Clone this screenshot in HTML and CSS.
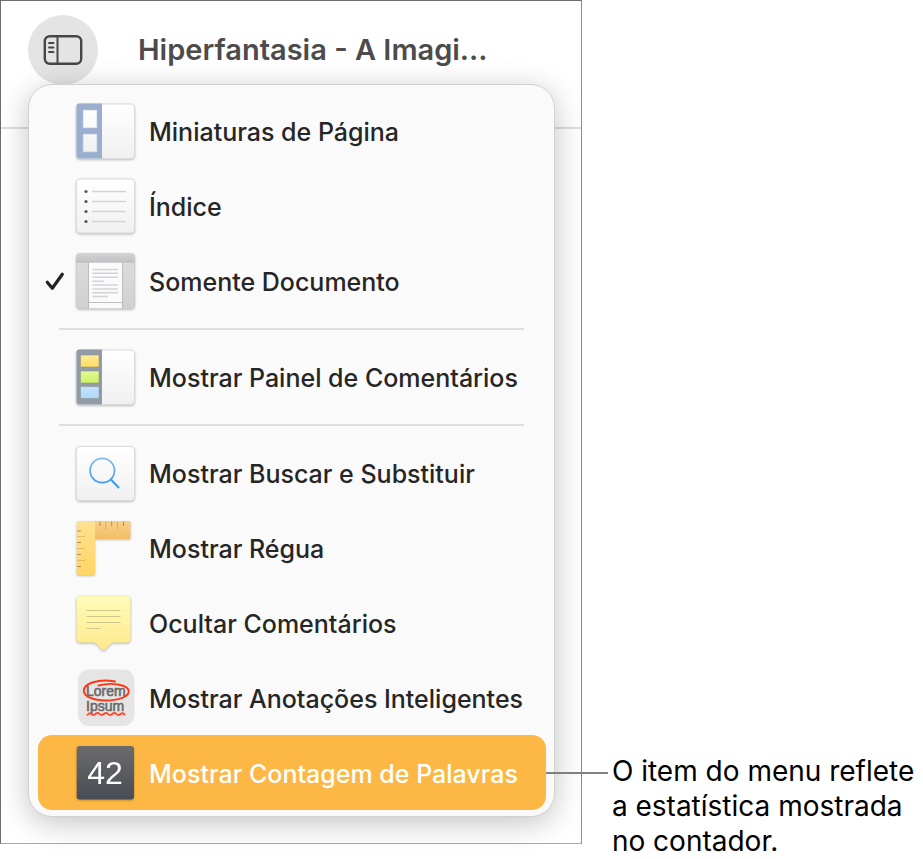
FILE: index.html
```html
<!DOCTYPE html>
<html lang="pt-BR">
<head>
<meta charset="utf-8">
<meta name="viewport" content="width=device-width, initial-scale=1">
<title>Hiperfantasia</title>
<link rel="stylesheet" href="styles.css">
</head>
<body>
<svg class="defs" aria-hidden="true">
  <defs>
    <linearGradient id="paper" x1="0" y1="0" x2="0" y2="1"><stop offset="0" stop-color="#fff"/><stop offset="1" stop-color="#f0f0f0"/></linearGradient>
    <linearGradient id="chrome" x1="0" y1="0" x2="0" y2="1"><stop offset="0" stop-color="#dcdddf"/><stop offset="1" stop-color="#cfd1d3"/></linearGradient>
    <linearGradient id="bar" x1="0" y1="0" x2="0" y2="1"><stop offset="0" stop-color="#d3d3d4"/><stop offset="1" stop-color="#c2c2c4"/></linearGradient>
    <linearGradient id="yellow" x1="0" y1="0" x2="0" y2="1"><stop offset="0" stop-color="#ffea94"/><stop offset="1" stop-color="#ffdc66"/></linearGradient>
    <linearGradient id="green" x1="0" y1="0" x2="0" y2="1"><stop offset="0" stop-color="#e0f994"/><stop offset="1" stop-color="#cdf367"/></linearGradient>
    <linearGradient id="blue" x1="0" y1="0" x2="0" y2="1"><stop offset="0" stop-color="#c5e2ff"/><stop offset="1" stop-color="#afd7ff"/></linearGradient>
    <linearGradient id="lens" x1="0" y1="0" x2="0" y2="1"><stop offset="0" stop-color="#7dbcf5"/><stop offset="1" stop-color="#3d9bf8"/></linearGradient>
    <linearGradient id="rulerV" x1="0" y1="0" x2="0" y2="1"><stop offset="0" stop-color="#ffe193"/><stop offset="1" stop-color="#ffd564"/></linearGradient>
    <linearGradient id="rulerH" x1="0" y1="0" x2="0" y2="1"><stop offset="0" stop-color="#fad18a"/><stop offset="1" stop-color="#f3bd62"/></linearGradient>
    <linearGradient id="note" x1="0" y1="0" x2="0" y2="1"><stop offset="0" stop-color="#fffcb9"/><stop offset="1" stop-color="#ffe88d"/></linearGradient>
    <linearGradient id="counter" x1="0" y1="0" x2="0" y2="1"><stop offset="0" stop-color="#6b6b6c"/><stop offset="1" stop-color="#484c55"/></linearGradient>
  </defs>
</svg>
<div class="page">
  <main class="window">
    <header class="toolbar">
      <button class="view-button" type="button" aria-label="Visualizar">
        <svg width="40" height="32" viewBox="0 0 40 32" fill="none" stroke="#464646">
          <rect x="1.8" y="2.2" width="36.4" height="27.6" rx="5" stroke-width="2.4"/>
          <path d="M14.5 2v28" stroke-width="2"/>
          <path d="M6 9h4.500M6 13.500h4.500M6 18h4.500" stroke-width="1.900" stroke-linecap="round"/>
        </svg>
      </button>
      <h1 class="title">Hiperfantasia - A Imagi...</h1>
    </header>
    <ul class="menu">
      <li><button class="item" type="button">
        <span class="check"></span>
        <svg class="icon" viewBox="0 0 60 60">
          <rect x="1.500" y="3" width="58" height="54.500" rx="3.500" fill="url(#paper)" stroke="#dcdcdc"/>
          <path d="M4.500 2.500H27V57.500H4.500a3 3 0 0 1-3-3V5.500a3 3 0 0 1 3-3z" fill="#9aafd0"/>
          <path d="M8 9h14v18H8zM8 33h14v18H8z" fill="url(#paper)" stroke="#b7c2d3" stroke-width=".6"/>
        </svg>
        <span class="label">Miniaturas de Página</span></button></li>
      <li><button class="item" type="button">
        <span class="check"></span>
        <svg class="icon" viewBox="0 0 60 60">
          <rect x="1.500" y="3" width="58" height="54" rx="3.500" fill="url(#paper)" stroke="#dcdcdc"/>
          <path d="M17 15.500h34M17 25.500h34M17 35.500h34M17 45.500h34" stroke="#d3d3d4" stroke-width="1.300"/>
          <g fill="#55565a"><circle cx="11" cy="15.500" r="1.600"/><circle cx="11" cy="25.500" r="1.600"/><circle cx="11" cy="35.500" r="1.600"/><circle cx="11" cy="45.500" r="1.600"/></g>
        </svg>
        <span class="label">Índice</span></button></li>
      <li><button class="item" type="button">
        <span class="check"><svg width="20" height="20" viewBox="0 0 20 20" fill="none" stroke="#222" stroke-width="3.200" stroke-linecap="round" stroke-linejoin="round"><path d="M2.300 11.200l5 6L17.300 3.300"/></svg></span>
        <svg class="icon" viewBox="0 0 60 60">
          <rect x="1.500" y="2.500" width="58" height="55" rx="3.500" fill="url(#chrome)" stroke="#c9cacc" stroke-width=".8"/>
          <path d="M5 2h51a3.500 3.500 0 0 1 3.500 3.500V11h-58V5.500A3.500 3.500 0 0 1 5 2z" fill="url(#bar)"/>
          <path d="M1.500 11.300h58" stroke="#b9babc" stroke-width=".8"/>
          <path d="M13.800 11.700h33.700V57.300H13.800z" fill="#fafafa"/>
          <path d="M13.500 11.500v46M47.500 11.500v46" stroke="#b5b7ba" stroke-width=".9"/>
          <path d="M13.500 51.500h34" stroke="#bdbfc1" stroke-width="1"/>
          <path d="M17.500 18.500h25.500M17.500 22.300h25.500M17.500 26.200h25.500M17.500 30.200h11.500M17.500 34h25.500M17.500 38h25.500M17.500 41.700h25.500M17.500 45.500h15.500" stroke="#d2d3d5" stroke-width="1.400"/>
        </svg>
        <span class="label">Somente Documento</span></button></li>
      <li class="separator" role="separator"></li>
      <li><button class="item" type="button">
        <span class="check"></span>
        <svg class="icon" viewBox="0 0 60 60">
          <rect x="1.500" y="3" width="58" height="54.500" rx="3.500" fill="url(#paper)" stroke="#dcdcdc"/>
          <path d="M4.500 2.500H27V57.500H4.500a3 3 0 0 1-3-3V5.500a3 3 0 0 1 3-3z" fill="#929ba6"/>
          <g stroke="#8b8e86" stroke-width=".5"><path d="M5.500 8h18.500v12H5.500z" fill="url(#yellow)"/><path d="M5.500 24h18.500v12H5.500z" fill="url(#green)"/><path d="M5.500 39.500h18.500v12H5.500z" fill="url(#blue)"/></g>
        </svg>
        <span class="label">Mostrar Painel de Comentários</span></button></li>
      <li class="separator" role="separator"></li>
      <li><button class="item" type="button">
        <span class="check"></span>
        <svg class="icon" viewBox="0 0 60 60">
          <rect x="1.500" y="3.500" width="58" height="54" rx="3.500" fill="url(#paper)" stroke="#dcdcdc"/>
          <circle cx="27.300" cy="27.500" r="12.200" fill="none" stroke="url(#lens)" stroke-width="1.700"/>
          <path d="M35.500 36l8.500 9" stroke="#429df8" stroke-width="2.200"/>
        </svg>
        <span class="label">Mostrar Buscar e Substituir</span></button></li>
      <li><button class="item" type="button">
        <span class="check"></span>
        <svg class="icon" viewBox="0 0 60 60">
          <rect x="12" y="3" width="43.500" height="18" rx="1.800" fill="url(#rulerH)"/>
          <rect x="1.700" y="3" width="18.300" height="54" rx="1.800" fill="url(#rulerV)"/>
          <path d="M25 3.500v4.500M36.700 3.500v4.500M48.500 3.500v4.500" stroke="#b0813f" stroke-width=".9"/>
          <path d="M30.700 3.500v8M42.500 3.500v8" stroke="#dda85a" stroke-width=".9"/>
          <path d="M2 13h4M2 24.500h4M2 36.500h4M2 48.500h4" stroke="#ae8b42" stroke-width=".9"/>
          <path d="M2 18.500h8M2 30.500h8M2 42.500h8" stroke="#e2b85c" stroke-width=".9"/>
        </svg>
        <span class="label">Mostrar Régua</span></button></li>
      <li><button class="item" type="button">
        <span class="check"></span>
        <svg class="icon" viewBox="0 0 60 60">
          <path d="M5 3h47a3.500 3.500 0 0 1 3.500 3.500V46a3.500 3.500 0 0 1-3.500 3.500H40c-5 0-6 3-8.500 6-1.800 2.200-4 2.200-5.800 0-2.700-3-3.700-6-8.700-6H5A3.500 3.500 0 0 1 1.500 46V6.500A3.500 3.500 0 0 1 5 3z" fill="url(#note)" stroke="#e0dbac" stroke-width=".5"/>
          <path d="M11.500 17.500h34M11.500 23.500h34M11.500 29.500h34M11.500 35.500h14" stroke="#d0c88a" stroke-width="1"/>
        </svg>
        <span class="label">Ocultar Comentários</span></button></li>
      <li><button class="item" type="button">
        <span class="check"></span>
        <svg class="icon icon-flat" viewBox="0 0 60 60">
          <rect x="3" y="1.500" width="56.500" height="56.500" rx="11" fill="#e5e5e5"/>
          <g class="sample"><text x="11" y="27.500">Lorem</text><text x="11" y="42.500">Ipsum</text></g>
          <path d="M40 13.500C23 10.500 9 15.500 8.800 22.500 8.700 29 19 32.600 31 32.500 43 32.400 53.500 29 53.700 23.500 54 17.300 38 13.800 23.500 17.500" fill="none" stroke="#ff3814" stroke-width="1.900" stroke-linecap="round"/>
          <path d="M12 47.500q2.400-3.600 4.200-1.500t4.200 0 4.200 0 4.200 0 4.200 0 4.200 0 4.200 0 4.200 0 4.200 1.200" fill="none" stroke="#ff4b30" stroke-width="1.900"/>
        </svg>
        <span class="label">Mostrar Anotações Inteligentes</span></button></li>
      <li><button class="item item-active" type="button">
        <span class="check"></span>
        <svg class="icon" viewBox="0 0 60 60">
          <rect x="1.700" y="3" width="57.300" height="53.500" rx="3" fill="url(#counter)"/>
          <text class="count" x="30" y="41">42</text>
        </svg>
        <span class="label">Mostrar Contagem de Palavras</span></button></li>
    </ul>
  </main>
  <aside class="callout"><p>O item do menu reflete a estatística mostrada no contador.</p></aside>
</div>
</body>
</html>
```
FILE: styles.css
```css
* { box-sizing: border-box; }

body {
  margin: 0;
  background: #fff;
  font-family: Inter, "Liberation Sans", sans-serif;
}

.defs { position: absolute; width: 0; height: 0; }

.page {
  display: grid;
  grid-template-columns: 58fr 34fr;
  min-height: 100vh;
}

.window {
  align-self: start;
  min-width: 0;
  padding-bottom: 26px;
  border: 1px solid #8c8c8c;
  border-top-color: #6f6d74;
  border-left-color: #6f6d74;
  border-bottom-color: #aaa;
}

.toolbar {
  display: flex;
  align-items: flex-start;
  gap: 40px;
  height: 128px;
  padding: 14px 27px;
  border-bottom: 2px solid #dedede;
}

.view-button {
  display: flex;
  flex: none;
  align-items: center;
  justify-content: center;
  width: 70px;
  height: 70px;
  padding: 0;
  border: 0;
  border-radius: 50%;
  background: #e4e4e4;
}

.title {
  margin: 0;
  color: #4c4c4c;
  font-size: 29px;
  font-weight: 600;
  line-height: 70px;
  white-space: nowrap;
}

.menu {
  position: relative;
  margin: -45px 26px 0 27px;
  padding: 8px 8px 6px 9px;
  border: 1px solid #d2d2d2;
  border-radius: 24px;
  background: #fafafa;
  box-shadow: 0 6px 30px rgba(0, 0, 0, 0.24);
  list-style: none;
}

.item {
  position: relative;
  display: flex;
  align-items: center;
  width: 100%;
  height: 75px;
  padding: 0 0 0 7px;
  border: 0;
  border-radius: 14px;
  background: none;
  color: #262626;
  font: inherit;
  font-size: 25px;
  font-weight: 500;
  text-align: left;
}

.check {
  display: flex;
  flex: none;
  width: 20px;
}

.icon {
  flex: none;
  width: 60px;
  height: 60px;
  margin: 0 14px 0 10px;
  filter: drop-shadow(0 1px 1px rgba(0, 0, 0, 0.25));
}

.icon-flat { filter: none; }

.label {
  padding-top: 2px;
  white-space: nowrap;
}

.separator {
  height: 21px;
  padding: 10px 22px 0 21px;
}

.separator::before {
  content: "";
  display: block;
  height: 2px;
  background: #dedede;
}

.item-active {
  background: #fdb744;
  color: #fff;
}

.item-active::after {
  content: "";
  position: absolute;
  top: 37px;
  left: 100%;
  width: 62px;
  height: 2px;
  background: #808080;
}

.sample {
  fill: #6b6b6b;
  stroke: #6b6b6b;
  stroke-width: 0.6px;
  font: 14px "Liberation Sans", sans-serif;
}

.count {
  fill: #fff;
  font: 32px "Liberation Sans", sans-serif;
  text-anchor: middle;
}

.callout {
  display: flex;
  align-items: flex-end;
  padding-left: 30px;
}

.callout p {
  margin: 0;
  color: #000;
  font-size: 28px;
  line-height: 35px;
}
```
